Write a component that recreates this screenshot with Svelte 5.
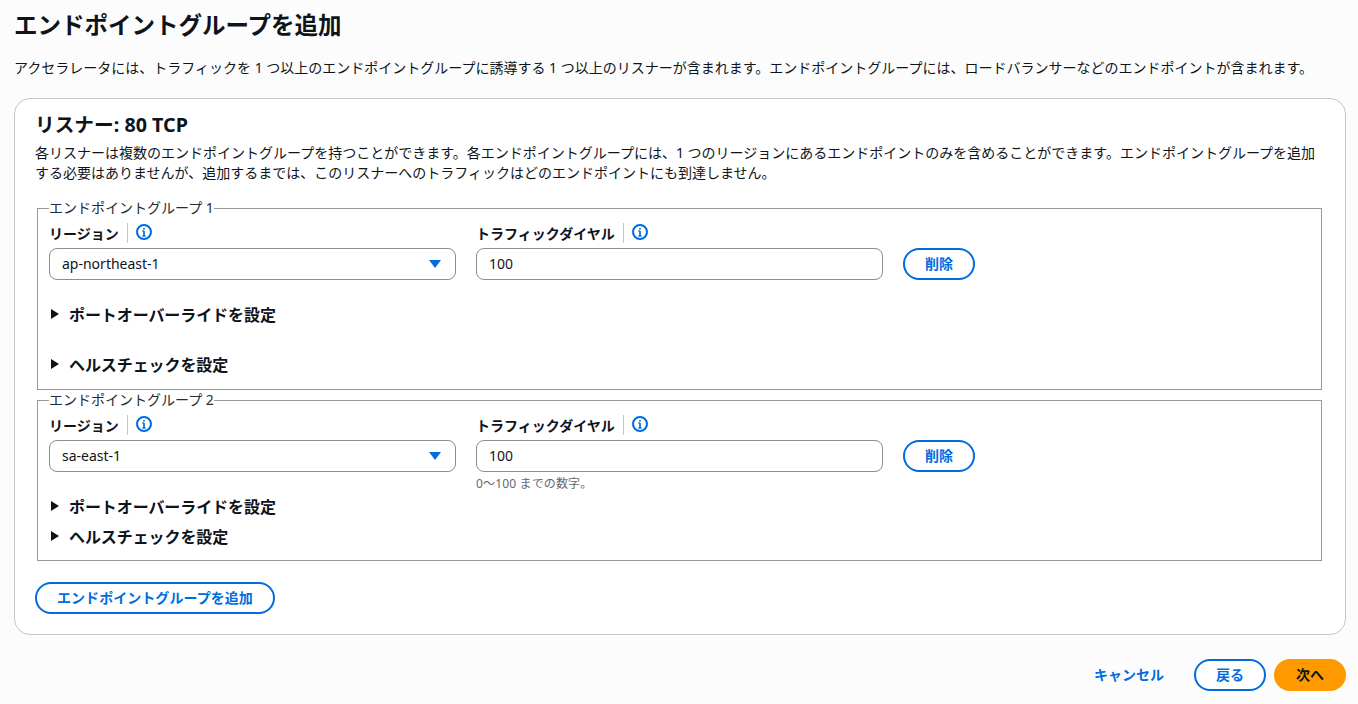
<script>
  const groups = [
    { name: 'エンドポイントグループ 1', region: 'ap-northeast-1', hint: false },
    { name: 'エンドポイントグループ 2', region: 'sa-east-1', hint: true }
  ];
</script>

{#snippet info()}
  <svg class="info" width="16" height="16" viewBox="0 0 16 16" fill="none" stroke="#006ce0" stroke-width="2">
    <circle cx="8" cy="8" r="7" />
    <path d="M8 7v5M6.5 12h3M6.5 7H8M8 4v1.6" stroke-width="1.7" />
  </svg>
{/snippet}

{#snippet caret()}
  <svg class="caret" width="8" height="10" viewBox="0 0 8 10"><path d="M0 0l8 5-8 5z" fill="#0f141a" /></svg>
{/snippet}

<main class="page">
  <h1>エンドポイントグループを追加</h1>
  <p class="intro">アクセラレータには、トラフィックを 1 つ以上のエンドポイントグループに誘導する 1 つ以上のリスナーが含まれます。エンドポイントグループには、ロードバランサーなどのエンドポイントが含まれます。</p>

  <section class="card">
    <h2>リスナー: 80 TCP</h2>
    <p class="desc">各リスナーは複数のエンドポイントグループを持つことができます。各エンドポイントグループには、1 つのリージョンにあるエンドポイントのみを含めることができます。エンドポイントグループを追加する必要はありませんが、追加するまでは、このリスナーへのトラフィックはどのエンドポイントにも到達しません。</p>

    {#each groups as g}
      <fieldset class:tight={g.hint}>
        <legend>{g.name}</legend>
        <div class="fields">
          <div class="field">
            <div class="label"><span>リージョン</span><i></i>{@render info()}</div>
            <div class="control select">
              <span>{g.region}</span>
              <svg width="12" height="8" viewBox="0 0 12 8"><path d="M0 0h12L6 8z" fill="#006ce0" /></svg>
            </div>
          </div>
          <div class="field">
            <div class="label"><span>トラフィックダイヤル</span><i></i>{@render info()}</div>
            <div class="control">100</div>
            {#if g.hint}<div class="hint">0〜100 までの数字。</div>{/if}
          </div>
          <button class="btn del">削除</button>
        </div>
        <div class="expander first">{@render caret()}<span>ポートオーバーライドを設定</span></div>
        <div class="expander">{@render caret()}<span>ヘルスチェックを設定</span></div>
      </fieldset>
    {/each}

    <button class="btn add">エンドポイントグループを追加</button>
  </section>

  <footer>
    <button class="link">キャンセル</button>
    <button class="btn back">戻る</button>
    <button class="btn next">次へ</button>
  </footer>
</main>

<style>
  :global(body) {
    margin: 0;
    background: #fcfcfc;
    color: #0f141a;
    font-family: "Noto Sans", "Noto Sans CJK JP", sans-serif;
    font-size: 14px;
  }
  .page {
    padding: 7px 12px 0 14px;
    height: 697px;
    overflow: hidden;
  }
  h1 {
    margin: 0;
    font-size: 23.5px;
    line-height: 36px;
    font-weight: 700;
  }
  .intro {
    margin: 15px 0 0;
    line-height: 20px;
    white-space: nowrap;
  }
  .card {
    box-sizing: border-box;
    margin-top: 20px;
    height: 537px;
    background: #fff;
    border: 1px solid #c6c6cd;
    border-radius: 16px;
    padding: 12px 20px 20px 20px;
  }
  h2 {
    margin: 0;
    font-size: 19.7px;
    line-height: 28px;
    font-weight: 700;
  }
  .desc {
    margin: 4px 0 0;
    line-height: 20px;
  }
  fieldset {
    margin: 17px 0 0 2px;
    width: 1285px;
    box-sizing: border-box;
    height: 190px;
    padding: 7px 11px 0;
    border: 1px solid #999;
  }
  fieldset.tight {
    margin-top: 2px;
    height: 169px;
  }
  legend {
    padding: 0;
    line-height: 16px;
    font-size: 14px;
    color: #232b37;
  }
  .fields {
    display: flex;
    gap: 20px;
    align-items: flex-start;
  }
  .field {
    width: 407px;
    position: relative;
  }
  .label {
    display: flex;
    align-items: center;
    height: 20px;
    font-weight: 700;
    font-size: 14px;
  }
  .label i {
    width: 1px;
    height: 20px;
    background: #c6c6cd;
    margin: 0 8px;
  }
  .info {
    display: block;
    margin-top: -2px;
  }
  .control {
    box-sizing: border-box;
    height: 32px;
    margin-top: 5px;
    border: 1px solid #8c8c94;
    border-radius: 8px;
    padding: 0 12px;
    display: flex;
    align-items: center;
    line-height: 20px;
    background: #fff;
  }
  .select {
    justify-content: space-between;
    padding-right: 14px;
  }
  .hint {
    position: absolute;
    top: 61px;
    left: 0;
    font-size: 12px;
    line-height: 16px;
    letter-spacing: 0.15px;
    color: #656871;
  }
  .btn {
    box-sizing: border-box;
    height: 32px;
    border: 2px solid #006ce0;
    border-radius: 20px;
    background: #fff;
    color: #006ce0;
    font: 700 14px/20px "Noto Sans", "Noto Sans CJK JP", sans-serif;
    padding: 0 20px;
  }
  .del {
    margin-top: 25px;
  }
  .expander {
    display: flex;
    align-items: center;
    gap: 10px;
    height: 24px;
    margin-top: 22px;
    font-size: 16px;
    font-weight: 700;
    letter-spacing: -0.08px;
  }
  .expander .caret {
    margin-left: 2px;
  }
  .expander.first + .expander {
    margin-top: 26px;
  }
  .tight .expander.first + .expander {
    margin-top: 6px;
  }
  .add {
    margin-top: 21px;
    display: block;
    letter-spacing: 0.05px;
  }
  footer {
    display: flex;
    justify-content: flex-end;
    align-items: center;
    gap: 8px;
    margin-top: 24px;
  }
  .link {
    border: 0;
    background: none;
    color: #006ce0;
    font: 700 14px/20px "Noto Sans", "Noto Sans CJK JP", sans-serif;
    padding: 0 20px;
    margin-right: 2px;
  }
  .next {
    background: #ff9900;
    border-color: #ff9900;
    color: #0f141a;
  }
</style>
